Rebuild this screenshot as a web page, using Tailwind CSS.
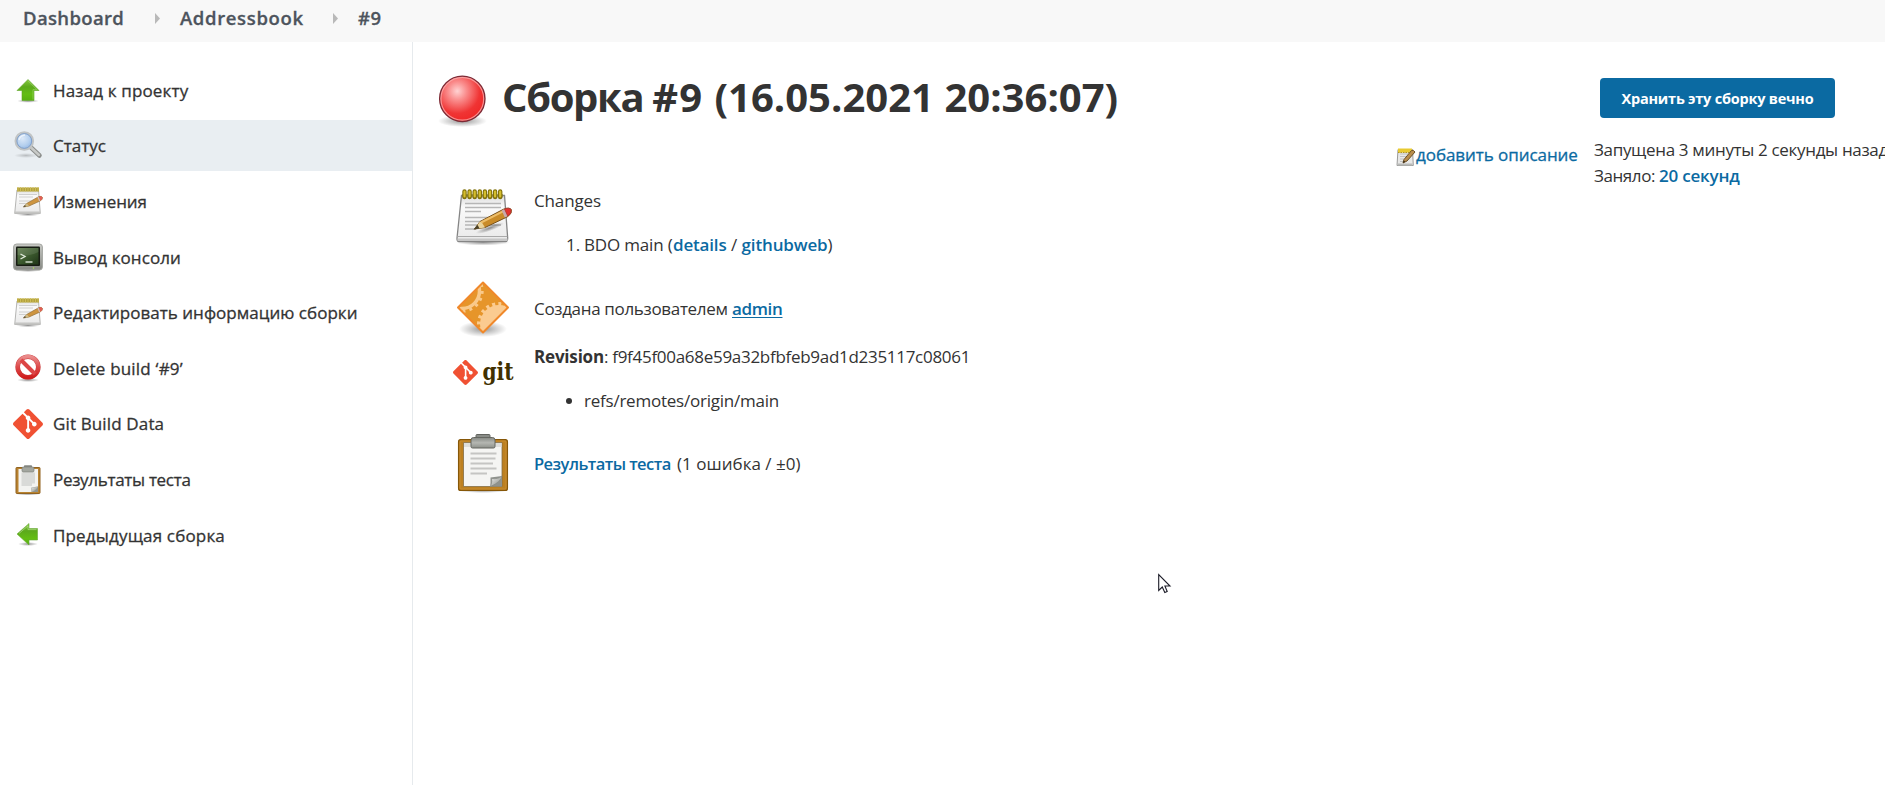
<!DOCTYPE html>
<html lang="ru">
<head>
<meta charset="utf-8">
<title>Addressbook #9 [Jenkins]</title>
<script src="https://cdn.jsdelivr.net/npm/@tailwindcss/browser@4"></script>
</head>
<body class="h-[785px] overflow-hidden bg-white font-['Open_Sans','Noto_Sans',sans-serif] text-[17px] leading-[26px] text-[#333]">

<!-- Shared icons -->
<svg class="absolute size-0" aria-hidden="true">
  <defs>
    <linearGradient id="green" x1="0" y1="0" x2="0" y2="1"><stop offset="0" stop-color="#85c83f"/><stop offset=".35" stop-color="#5ca91c"/><stop offset=".7" stop-color="#63bd13"/><stop offset="1" stop-color="#58b010"/></linearGradient>
    <linearGradient id="paper" x1="0" y1="0" x2="0" y2="1"><stop offset="0" stop-color="#dcdcdc"/><stop offset=".25" stop-color="#fafafa"/><stop offset="1" stop-color="#e9e9e9"/></linearGradient>
    <linearGradient id="red" x1="0" y1="0" x2="0" y2="1"><stop offset="0" stop-color="#ea8a8a"/><stop offset=".5" stop-color="#dd4a4a"/><stop offset="1" stop-color="#cf1d1d"/></linearGradient>
    <linearGradient id="frame" x1="0" y1="0" x2="0" y2="1"><stop offset="0" stop-color="#c9cac6"/><stop offset="1" stop-color="#858782"/></linearGradient>
    <linearGradient id="screen" x1="0" y1="0" x2="1" y2="1"><stop offset="0" stop-color="#5d7a4b"/><stop offset=".5" stop-color="#3c5a2e"/><stop offset="1" stop-color="#1f3518"/></linearGradient>
    <linearGradient id="clip" x1="0" y1="0" x2="0" y2="1"><stop offset="0" stop-color="#868984"/><stop offset=".5" stop-color="#b5b7b2"/><stop offset="1" stop-color="#8d908a"/></linearGradient>
    <linearGradient id="curl" x1="0" y1="0" x2="1" y2="1"><stop offset="0" stop-color="#f4f4f2"/><stop offset=".5" stop-color="#b9bbb7"/><stop offset="1" stop-color="#7d807a"/></linearGradient>
    <radialGradient id="lens" cx=".4" cy=".35" r=".7"><stop offset="0" stop-color="#dce9f8"/><stop offset=".6" stop-color="#b4cfee"/><stop offset="1" stop-color="#8db3e2"/></radialGradient>
    <radialGradient id="ball" cx=".39" cy=".33" r=".66"><stop offset="0" stop-color="#ffd2d2"/><stop offset=".3" stop-color="#fa8f8f"/><stop offset=".75" stop-color="#f03434"/><stop offset="1" stop-color="#ef2929"/></radialGradient>
    <radialGradient id="shade"><stop offset="0" stop-color="#000" stop-opacity=".42"/><stop offset=".5" stop-color="#000" stop-opacity=".2"/><stop offset="1" stop-color="#000" stop-opacity="0"/></radialGradient>
    <clipPath id="diamond"><path d="M30 5 54 30 30 54 6 30Z"/></clipPath>
  </defs>

  <symbol id="i-arrow" viewBox="0 0 30 30">
    <path d="M15 4.500 26 15.500H21V25.500H9V15.500H4Z" fill="url(#green)" stroke="#5da427" stroke-opacity=".6" stroke-linejoin="round"/>
    <path d="M15 5.800 23.800 14.600H20V24.500" fill="none" stroke="#b4e289" stroke-opacity=".45"/>
  </symbol>

  <symbol id="i-notepad" viewBox="0 0 60 60">
    <ellipse cx="30" cy="56.500" rx="27" ry="3" fill="url(#shade)"/>
    <path d="M8.500 9.500h43l3.200 42.500q0 3.500-2 3.500H6q-2.200 0-2-3.500Z" fill="url(#paper)" stroke="#858585" stroke-width="1.300"/>
    <path d="M4.500 50.500h49.800" stroke="#aaa" stroke-width="1.200"/><path d="M4.500 52.500h50v2.500h-50Z" fill="#c6c6c6"/>
    <path d="M12 17.500h36M12 21.500h36M12 25.500h16M12 31.500h26M12 35.500h23M12 39h13M32 39h16M12 43h11" stroke="#b6b6b6" stroke-width="1.300"/>
    <path d="M9 8h41v3.500H9Z" fill="#8d8544" opacity=".65"/>
    <path d="M11.500 5.500v5.500M16.600 5.500v5.500M21.700 5.500v5.500M26.800 5.500v5.500M31.900 5.500v5.500M37 5.500v5.500M42.100 5.500v5.500M47.200 5.500v5.500" stroke="#81710a" stroke-width="4.400" stroke-linecap="round"/>
    <path d="M11.500 5.500v5M16.600 5.500v5M21.700 5.500v5M26.800 5.500v5M31.900 5.500v5M37 5.500v5M42.100 5.500v5M47.200 5.500v5" stroke="#d5bd2d" stroke-width="2.200" stroke-linecap="round"/>
    <ellipse cx="37" cy="42" rx="15" ry="3" fill="url(#shade)" transform="rotate(-20 37 42)"/>
    <path d="M21.500 43 27 35.500 50.500 23.200Q56 21 58.300 23.500 59.500 27 55 30.500L32 41.500Z" fill="#c98b28" stroke="#76511c" stroke-linejoin="round"/>
    <path d="M28 36.500 51 24.800" stroke="#edbd68" stroke-width="2"/>
    <path d="M21.500 43 27 35.500 29.500 37.500 32 41.500Z" fill="#ead39b"/><path d="M20.500 43.500 24.500 38.800 26.500 42.500Z" fill="#4a4027"/>
    <path d="M48.700 24.500 51.500 23 55 30 51.800 31.600Z" fill="#c9a9ad"/>
    <path d="M51.500 23Q56 21.200 58 23.500 59.200 26.800 54.800 30.200Z" fill="#e3332f" stroke="#a33" stroke-width=".7"/>
  </symbol>

  <symbol id="i-notepad-small" viewBox="0 0 30 30">
    <ellipse cx="15" cy="28.500" rx="12" ry="1.700" fill="url(#shade)"/>
    <path d="M4 4h21.500l1.800 23.500H1.700Z" fill="url(#paper)" stroke="#b5b5b3"/>
    <path d="M2 25.500h25v2H2Z" fill="#c5c5c3"/>
    <path d="M6 8.500h18M6 11h14M6 15h12M6 17.500h8" stroke="#cfcfcf"/>
    <path d="M4 1.500h22v4H4Z" fill="#b3a23c"/>
    <path d="M5 1v4.500M7.500 1v4.500M10 1v4.500M12.500 1v4.500M15 1v4.500M17.500 1v4.500M20 1v4.500M22.500 1v4.500M25 1v4.500" stroke="#d1c05c" stroke-width=".9"/>
    <path d="M10.500 21 14 17.300 26 10.500Q28.500 9.800 29.500 11.500 29.600 13.300 27.500 14.800L16 20Z" fill="#ce9540" stroke="#93703a" stroke-width=".7"/>
    <path d="M10.500 21 14 17.300 16 20Z" fill="#cdbb89"/><path d="M10 21.300l2-2.200 1 1.500Z" fill="#554c35"/>
    <path d="M26 10.500Q28.500 9.800 29.500 11.500 29.600 13.300 27.500 14.800Z" fill="#e25d58"/><path d="M25 11l1.700 4" stroke="#d3bcc0" stroke-width="1.200"/>
  </symbol>

  <symbol id="i-clipboard" viewBox="0 0 60 60">
    <ellipse cx="30" cy="57.500" rx="25" ry="2.500" fill="url(#shade)"/>
    <rect x="5.600" y="6.600" width="48.800" height="50.800" rx="2" fill="#bd8020" stroke="#865708" stroke-width="1.300"/>
    <rect x="7" y="8" width="46" height="48" rx="1" fill="none" stroke="#c98f36" stroke-opacity=".8"/>
    <path d="M10.500 9.500h38.500V53.500H10.500Z" fill="#f5f5f3" stroke="#7d6a43" stroke-opacity=".75"/>
    <path d="M11 10h37.500V14H11Z" fill="#dededb"/>
    <path d="M17.500 20.500h26M17.500 25.500h25M17.500 30.500h22.500M17.500 35.500h26M17.500 40.500h16.500" stroke="#c5c5c3" stroke-width="2"/>
    <path d="M37.500 53.500V44.500L49 43v10.500Z" fill="#8f928d"/><path d="M37.500 53.500Q39.500 48 38.500 45.500 45 46.500 49 43 48 49 37.500 53.500Z" fill="url(#curl)" stroke="#878984" stroke-width=".7"/>
    <path d="M23 5.500V2.500q0-1 1-1H36q1 0 1 1V5.500Z" fill="#898c87" stroke="#62645f"/>
    <path d="M18 13.500V7q0-2.500 2.500-2.500H39.500Q42 4.500 42 7v6.500Q42 15 40.500 15H19.500Q18 15 18 13.500Z" fill="url(#clip)" stroke="#656761"/>
  </symbol>

  <symbol id="i-clipboard-small" viewBox="0 0 30 30">
    <ellipse cx="15" cy="29" rx="13" ry="1.300" fill="url(#shade)"/>
    <rect x="3" y="2.500" width="24" height="26" rx=".7" fill="#b98330" stroke="#916321"/>
    <path d="M5.500 4h19.500v23H5.500Z" fill="#f3f3f1"/><path d="M8.500 7.500h13.500v11H19v2.500H8.500Z" fill="#d9dad8"/>
    <path d="M18.500 27V22.500L25 21.500V27Z" fill="#90938d"/><path d="M18.500 27q1-3 .5-4.500 4 0 6-1.500-1 4-6.500 6Z" fill="url(#curl)"/>
    <path d="M11 2.500V1q0-.7.700-.7h6.600q.7 0 .7.700v1.500Z" fill="#858883"/>
    <rect x="9" y="2" width="12" height="5" rx="1.200" fill="#a3a69f" stroke="#7f827c" stroke-width=".7"/>
  </symbol>

  <symbol id="i-git" viewBox="0 0 24 24">
    <path fill="#f05133" d="M23.546 10.930L13.067.452c-.604-.603-1.582-.603-2.188 0L8.708 2.627l2.760 2.760c.645-.215 1.379-.070 1.889.441.516.515.658 1.258.438 1.900l2.658 2.660c.645-.223 1.387-.078 1.900.435.721.720.721 1.884 0 2.604-.719.719-1.881.719-2.600 0-.539-.541-.674-1.337-.404-1.996L12.860 8.955v6.525c.176.086.342.203.488.348.713.721.713 1.883 0 2.600-.719.721-1.889.721-2.609 0-.719-.719-.719-1.879 0-2.598.182-.180.387-.316.605-.406V8.835c-.217-.091-.424-.222-.600-.401-.545-.545-.676-1.342-.396-2.009L7.636 3.700.450 10.881c-.600.605-.600 1.584 0 2.189l10.480 10.477c.604.604 1.582.604 2.186 0l10.430-10.430c.605-.603.605-1.582 0-2.187"/>
  </symbol>
</svg>

<header class="flex h-[42px] items-center bg-[#f8f8f8] pb-1.5 pl-[23px] text-[18.500px] font-semibold text-[#4d545d] [-webkit-text-stroke:0.300px]">
  <a class="w-[101px] whitespace-nowrap tracking-[0.350px]">Dashboard</a>
  <svg class="ml-[31px] h-[11px] w-[5px]" viewBox="0 0 5 11"><path d="M0 0 5 5.500 0 11Z" fill="#b9b9b9"/></svg>
  <a class="ml-5 w-[124px] whitespace-nowrap tracking-[0.640px]">Addressbook</a>
  <svg class="ml-[29px] h-[11px] w-[5px]" viewBox="0 0 5 11"><path d="M0 0 5 5.500 0 11Z" fill="#b9b9b9"/></svg>
  <a class="ml-5 tracking-[0.500px]">#9</a>
</header>

<div class="flex h-[743px]">
  <nav class="flex w-[413px] shrink-0 flex-col gap-[4.600px] border-r border-[#e6eaed] pt-[22.400px] font-medium [-webkit-text-stroke:0.300px]">
    <a class="flex h-[51px] items-center gap-2.5 pl-[13px]"><svg class="size-[30px]" viewBox="0 0 30 30"><ellipse cx="15" cy="26" rx="11" ry="1.800" fill="url(#shade)"/><use href="#i-arrow"/></svg><span class="pt-0.5 tracking-[0.150px]">Назад к проекту</span></a>
    <a class="flex h-[51px] items-center gap-2.5 bg-[#e9eef2] pl-[13px]">
      <svg class="size-[30px]" viewBox="0 0 30 30"><ellipse cx="13" cy="25.500" rx="12" ry="2.500" fill="url(#shade)" opacity=".5"/><path d="M18 17.500 26.500 25.500" stroke="#8b8d8b" stroke-width="4.500" stroke-linecap="round"/><path d="M18 17.500 26 25" stroke="#c7c9c7" stroke-width="2.500" stroke-linecap="round"/><circle cx="11.300" cy="11" r="8.500" fill="url(#lens)" stroke="#c1c4c5" stroke-width="2.600"/><circle cx="11.300" cy="11" r="7.400" fill="none" stroke="#6e96cc" stroke-width=".8"/><path d="M6 10q1-4.500 6-5" fill="none" stroke="#fff" stroke-opacity=".6" stroke-width="1.500"/></svg>
      <span class="pt-0.5">Статус</span></a>
    <a class="flex h-[51px] items-center gap-2.5 pl-[13px]"><svg class="size-[30px]"><use href="#i-notepad-small"/></svg><span class="pt-0.5 tracking-[-0.050px]">Изменения</span></a>
    <a class="flex h-[51px] items-center gap-2.5 pl-[13px]">
      <svg class="size-[30px]" viewBox="0 0 30 30"><ellipse cx="15" cy="28.500" rx="13" ry="1.500" fill="url(#shade)"/><rect x=".6" y="2" width="28.800" height="26" rx="3" fill="url(#frame)" stroke="#a3a5a0"/><rect x="3" y="4.500" width="24" height="19.500" rx="1" fill="#171c13"/><rect x="4.500" y="6" width="21" height="16.500" fill="url(#screen)"/><path d="M4.500 13q9 2.500 21-3v-4h-21Z" fill="#fff" opacity=".1"/><path d="M7.500 12l4.500 2.500-4.500 2.500" fill="none" stroke="#dfe8da" stroke-width="1.400"/><path d="M12.500 20h7" stroke="#dfe8da" stroke-width="1.400"/><circle cx="20.500" cy="26" r=".8" fill="#aee35a"/></svg>
      <span class="pt-0.5 tracking-[0.080px]">Вывод консоли</span></a>
    <a class="flex h-[51px] items-center gap-2.5 pl-[13px]"><svg class="size-[30px]"><use href="#i-notepad-small"/></svg><span class="pt-0.5 tracking-[0.030px]">Редактировать информацию сборки</span></a>
    <a class="flex h-[51px] items-center gap-2.5 pl-[13px]">
      <svg class="size-[30px]" viewBox="0 0 30 30"><ellipse cx="15" cy="27" rx="11" ry="2" fill="url(#shade)"/><circle cx="15" cy="14" r="10.300" fill="#fff" stroke="#c93a3a" stroke-width="4.600"/><circle cx="15" cy="14" r="10.300" fill="none" stroke="url(#red)" stroke-width="3.800"/><path d="M8 7 22 21" stroke="#dc4444" stroke-width="4"/></svg>
      <span class="pt-0.5 tracking-[0.200px]">Delete build ‘#9’</span></a>
    <a class="flex h-[51px] items-center gap-2.5 pl-[13px]"><svg class="mt-px size-[30px]"><use href="#i-git"/></svg><span class="pt-0.5 tracking-[0.140px]">Git Build Data</span></a>
    <a class="flex h-[51px] items-center gap-2.5 pl-[13px]"><svg class="mt-px size-[30px]"><use href="#i-clipboard-small"/></svg><span class="pt-0.5 tracking-[-0.300px]">Результаты теста</span></a>
    <a class="flex h-[51px] items-center gap-2.5 pl-[13px]"><svg class="size-[30px]" viewBox="0 0 30 30"><ellipse cx="15" cy="24" rx="10" ry="2" fill="url(#shade)"/><path d="M4 14 16 3.500V8.500H24.500V20H16V25Z" fill="url(#green)" stroke="#6cab3c" stroke-opacity=".6" stroke-linejoin="round"/><path d="M6 13.500 15 5.800V9.600H23.500" fill="none" stroke="#c9e9ab" stroke-opacity=".5"/></svg><span class="pt-0.5 tracking-[0.170px]">Предыдущая сборка</span></a>
  </nav>

  <main class="flex min-w-0 flex-1 overflow-hidden whitespace-nowrap">
    <section class="w-[983px] shrink-0 pt-[28px]">
      <h1 class="flex h-[53px] items-center pl-[22px] text-[40px] font-bold leading-[50px]">
        <svg class="mr-[7px] mt-[8px] size-[60px] shrink-0" viewBox="0 0 60 60"><ellipse cx="27.500" cy="50" rx="24.500" ry="6" fill="url(#shade)"/><circle cx="27.300" cy="27.800" r="22.600" fill="url(#ball)" stroke="#7d2a35" stroke-width="1.500"/><circle cx="27.300" cy="27.800" r="21.400" fill="none" stroke="#ffb0b0" stroke-opacity=".75" stroke-width="1.200"/></svg>
        <span><span class="tracking-[-1.350px]">Сборка </span><span class="tracking-[1px]">#9 </span><span class="tracking-[0.020px]">(16.05.2021 20:36:07)</span></span>
      </h1>

      <div class="mt-[61px] grid grid-cols-[60px_1fr] gap-x-[22px] pl-10">
        <svg class="mt-[2px] size-[60px]"><use href="#i-notepad"/></svg>
        <div class="h-[94px] pt-[4.400px]">
          <p class="-ml-px tracking-[-0.130px]">Changes</p>
          <ol class="mt-[18px] list-none pl-[31px]"><li class="flex"><span class="w-[18px]">1.</span><span class="w-[89px] whitespace-pre tracking-[-0.170px]">BDO main (</span><a class="font-semibold tracking-[-0.170px] text-[#0b6aa2]">details</a><span class="whitespace-pre"> / </span><a class="font-semibold tracking-[-0.160px] text-[#0b6aa2]">githubweb</a>)</li></ol>
        </div>

        <svg class="size-[60px]" viewBox="0 0 60 60"><ellipse cx="30" cy="51" rx="24" ry="8" fill="url(#shade)"/>
          <path d="M30 4 55.500 29.500 30 55 4.500 29.500Z" fill="#e6952a"/>
          <g clip-path="url(#diamond)"><circle cx="9" cy="13" r="17.500" fill="none" stroke="#f9c98a" stroke-width="3.500"/><circle cx="9" cy="13" r="20.200" fill="none" stroke="#f9c98a" stroke-width="3" stroke-dasharray="3 4"/><circle cx="46" cy="46" r="19" fill="#fbcb90"/><circle cx="46" cy="46" r="20" fill="none" stroke="#fbcb90" stroke-width="4" stroke-dasharray="3 3.200"/></g>
          <path d="M30 4.500 55 29.500 30 54.500 5 29.500Z" fill="none" stroke="#f0882a" stroke-width="2" stroke-linejoin="round"/></svg>
        <p class="-ml-px flex h-[60px] items-center pt-px"><span class="w-[198px] tracking-[-0.330px]">Создана пользователем</span><a class="font-semibold tracking-[-0.350px] text-[#0b6aa2] underline underline-offset-2">admin</a></p>

        <div class="flex h-[94px] pt-[18.500px]">
          <svg class="h-9 w-[62px] overflow-visible" viewBox="0 0 62 36"><use href="#i-git" x="0" y="3" width="25" height="25"/><text x="29.500" y="23" textLength="31" lengthAdjust="spacingAndGlyphs" font-family="DejaVu Serif" font-weight="700" font-size="24" fill="#413000">git</text></svg>
        </div>
        <div class="-ml-px h-[94px] pt-[6.400px]">
          <p><b class="font-bold tracking-[-0.190px]">Revision</b><span class="tracking-[-0.290px]">: f9f45f00a68e59a32bfbfeb9ad1d235117c08061</span></p>
          <ul class="mt-[18px] pl-8"><li class="flex items-center"><span class="mr-3 size-1.5 rounded-full bg-[#333]"></span><span class="tracking-[-0.230px]">refs/remotes/origin/main</span></li></ul>
        </div>

        <svg class="mt-px size-[60px]"><use href="#i-clipboard"/></svg>
        <p class="-ml-px flex h-[64px] items-center"><a class="w-[143px] text-[16.500px] font-semibold tracking-[-0.540px] text-[#0b6aa2]">Результаты теста</a><span class="tracking-[0.030px]">(1 ошибка / ±0)</span></p>
      </div>
    </section>

    <aside class="flex w-[198px] shrink-0 items-start pt-[100px]">
      <svg class="mt-[5px] size-5" viewBox="0 0 20 20"><path d="M2 2.500h14.500l.8 16H1Z" fill="#e8e8e7" stroke="#9b9b9a"/><path d="M1.500 16.500h15v2h-15Z" fill="#b9bab8"/><path d="M4 7h8M4 9.500h7M4 12h4M4 14.500h3" stroke="#c0c0bf"/><path d="M2 1.500h14v4H2Z" fill="#e8ca31"/><path d="M2 5.500h14" stroke="#b5971b" stroke-dasharray="1.500 1"/><path d="M7 16 8 12.500 15.500 3.500Q17.500 2.500 19 5L11 14Z" fill="#b98d4c" stroke="#6c5028"/><path d="M7 16l.7-2.500 1.500 1.300Z" fill="#302716"/></svg>
      <a class="font-medium tracking-[-0.060px] text-[#0b6aa2] [-webkit-text-stroke:0.300px]">добавить описание</a>
    </aside>

    <aside class="shrink-0 pt-9">
      <button class="ml-1.5 block h-10 w-[235px] rounded bg-[#0b6aa2] pt-0.5 text-[14.500px] font-bold tracking-[-0.220px] text-white">Хранить эту сборку вечно</button>
      <p class="mt-[18.500px] tracking-[-0.330px]">Запущена 3 минуты 2 секунды назад</p>
      <p class="flex"><span class="w-[65px] tracking-[-0.420px]">Заняло:</span><a class="font-semibold tracking-[-0.200px] text-[#0b6aa2]">20 секунд</a></p>
    </aside>
  </main>
</div>

<!-- Mouse pointer -->
<svg class="absolute left-[1158px] top-[573px] h-[21px] w-[14px]" viewBox="0 0 14 21"><path d="M.7 1.500V17.500L4.300 14 6.800 19.500 9.200 18.500 6.900 13H12Z" fill="#fff" stroke="#1c1c28" stroke-width="1.100"/></svg>
</body>
</html>
